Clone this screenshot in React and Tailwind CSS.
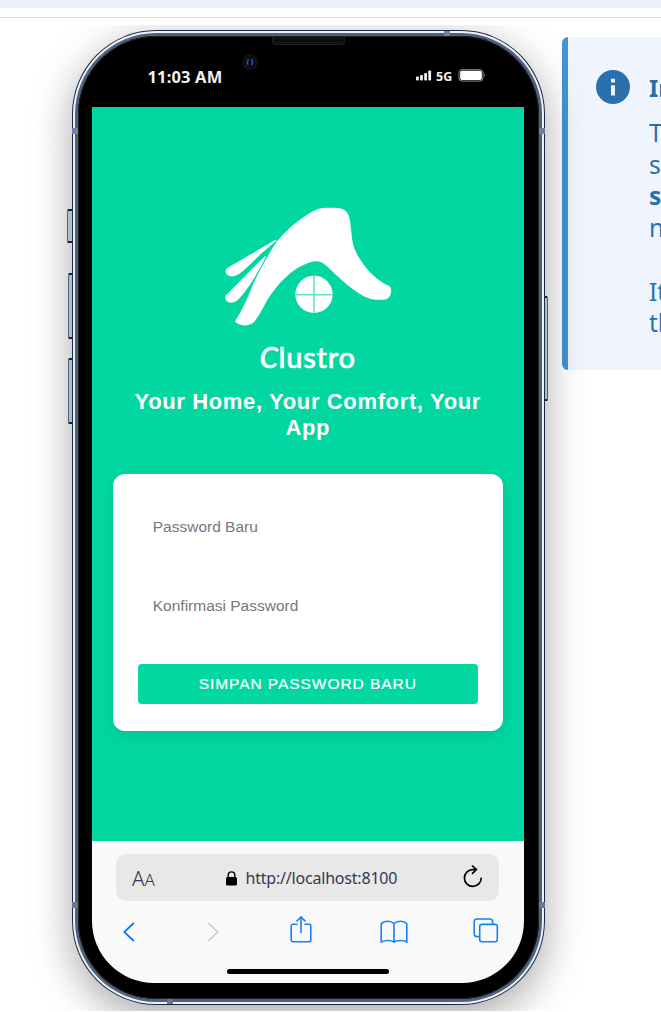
import React from "react";

function Logo() {
  return (
    <svg className="block h-[125px] w-[175px]" viewBox="60 45 525 375" fill="#fff">
      <path d="M105 394Q120 372 135 340C147 315 156 290 165 270Q181 237 200 205Q214 177 230 155Q246 135 270 113C300 88 328 68 352 58C368 52 410 53 425 56C443 62 449 78 451 100C455 130 455 155 465 180C485 225 525 270 566 287C577 292 576 318 562 326C550 331 525 330 512 327C465 312 420 265 380 228C362 212 350 212 330 217C275 235 235 280 205 325C190 350 180 375 163 395C145 412 115 408 105 394Z" />
      <path d="M227 149L82 234C73 240 76 255 88 258C103 262 113 255 125 246C145 230 165 208 185 190L229 152Z" />
      <path d="M195 198L78 316C72 323 78 338 92 338C105 338 113 332 121 322C138 302 152 282 165 260L198 201Z" />
      <circle cx="342" cy="313" r="56" />
      <path d="M342 257V369M286 314H398" stroke="#5fe3c0" strokeWidth="4.5" />
    </svg>
  );
}

function StatusBar() {
  return (
    <div className="flex h-[71px] items-start pt-[29px] pl-[69.5px] font-['Noto_Sans',sans-serif] font-bold text-[#f0f0f0]">
      <span className="w-[268px] text-[16.5px] leading-[24px] tracking-[0.15px] whitespace-nowrap">11:03 AM</span>
      <svg className="mt-[5px] block h-[11px] w-[16px]" viewBox="0 0 16 11" fill="#f0f0f0">
        <rect x="0" y="6.5" width="2.8" height="4" rx="0.8" />
        <rect x="4.1" y="5" width="2.8" height="5.5" rx="0.8" />
        <rect x="8.2" y="3" width="2.8" height="7.5" rx="0.8" />
        <rect x="12.3" y="0.5" width="2.8" height="10" rx="0.8" />
      </svg>
      <span className="ml-[4.5px] w-[21px] text-[12.5px] leading-[23px]">5G</span>
      <svg className="mt-[4px] ml-[0.5px] block h-[13px] w-[28px]" viewBox="0 0 28 13">
        <rect x="1" y="0.7" width="24" height="11.4" rx="3" fill="none" stroke="#8d8d8d" />
        <rect x="2.2" y="1.8" width="21.6" height="9.2" rx="1.8" fill="#fff" />
        <path d="M26 4.5Q27.6 6.3 26 8.2Z" fill="#8d8d8d" />
      </svg>
    </div>
  );
}

function LoginScreen() {
  return (
    <div className="flex h-[734px] flex-col items-center bg-[#02d7a1] pt-[98px] font-['Liberation_Sans',Arial,sans-serif]">
      <Logo />
      <div className="mt-[8px] h-[38px] font-[Lato,sans-serif] text-[29px] leading-[38px] font-medium tracking-[0.75px] text-white [-webkit-text-stroke:0.6px_white]">
        <span className="italic">C</span>lustro
      </div>
      <h1 className="mt-[13px] text-center text-[22px] leading-[26px] font-bold tracking-[0.64px] whitespace-nowrap text-white">
        Your Home, Your Comfort, Your
        <br />
        App
      </h1>
      <form className="mt-[33px] flex h-[257px] w-[390px] flex-col rounded-[12px] bg-white px-[25px] pt-[33px] shadow-[0_4px_16px_rgba(0,0,0,0.1)]">
        <div className="h-[79px] pl-[15px] text-[15.5px] leading-[40px] text-[#777]">Password Baru</div>
        <div className="h-[78px] pl-[15px] text-[15.5px] leading-[40px] text-[#777]">Konfirmasi Password</div>
        <button type="button" className="h-[40px] w-[340px] rounded-[4px] bg-[#02d7a1] text-[15.5px] leading-[40px] tracking-[0.95px] text-white [-webkit-text-stroke:0.2px_white]">
          SIMPAN PASSWORD BARU
        </button>
      </form>
    </div>
  );
}

function BrowserBar() {
  return (
    <div className="h-[142px] rounded-b-[62px] bg-[#f9f9f9] pt-[13px] font-['Noto_Sans',sans-serif]">
      <div className="ml-[24px] flex h-[47px] w-[383px] items-center rounded-[10px] bg-[#e8e8e8] pl-[16px] text-[#2d3a52]">
        <span className="w-[94px] pt-[2px] text-[20.5px] leading-[45px] [font-weight:350]">
          A<span className="text-[17px]">A</span>
        </span>
        <svg className="mt-px block h-[15px] w-[11px]" viewBox="0 0 11 15">
          <rect y="6" width="11" height="8.5" rx="1.6" fill="#000" />
          <path d="M2.2 7V4.2a3.3 3.3 0 0 1 6.6 0V7" fill="none" stroke="#000" strokeWidth="1.4" />
        </svg>
        <span className="ml-[8.5px] w-[217.5px] text-[16px] whitespace-nowrap tracking-[-0.2px]">http://localhost:8100</span>
        <svg className="mt-[-3px] block h-[24px] w-[20px]" viewBox="0 0 20 24" fill="none" stroke="#000" strokeWidth="1.7">
          <path d="M18.2 13.6A8.4 8.4 0 1 1 9.8 5.6H13M9 1.5L13.4 5.6L9 9.8" />
        </svg>
      </div>
      <div className="flex h-[60px] items-center pl-[31px]">
        <svg className="mt-[1px] h-[20px] w-[12px]" viewBox="0 0 12 20" fill="none" stroke="#007aff" strokeWidth="1.8">
          <path d="M10.8 1L1.2 10L10.8 19" />
        </svg>
        <svg className="mt-[1px] ml-[72px] h-[20px] w-[12px]" viewBox="0 0 12 20" fill="none" stroke="#c9c9c9" strokeWidth="1.5">
          <path d="M1.2 1L10.8 10L1.2 19" />
        </svg>
        <svg className="mt-[-4px] ml-[71px] h-[27px] w-[22px]" viewBox="0 0 22 27" fill="none" stroke="#1680ff" strokeWidth="1.6">
          <path d="M7.5 8.3H3a1.8 1.8 0 0 0-1.8 1.8V24A1.8 1.8 0 0 0 3 25.8H19a1.8 1.8 0 0 0 1.8-1.8V10.1A1.8 1.8 0 0 0 19 8.3H14.5M11 17V1M6.5 5.3L11 1L15.5 5.3" />
        </svg>
        <svg className="mt-[1px] ml-[67.5px] h-[23px] w-[28px]" viewBox="0 0 28 23" fill="none" stroke="#1680ff" strokeWidth="1.6">
          <path d="M14 3.5C11 .5 4.5 .2 1.2 3.8V22C4.5 20 11 20 14 22C17 20 23.500 20 26.800 22V3.800C23.500 .2 17 .5 14 3.500V22" />
        </svg>
        <svg className="mt-[-2px] ml-[65px] h-[25px] w-[26px]" viewBox="0 0 26 25" fill="none" stroke="#1680ff" strokeWidth="1.6">
          <path d="M6.500 18.600H4A2.800 2.800 0 0 1 1.200 15.800V3.800A2.800 2.800 0 0 1 4 1H16.800A2.800 2.800 0 0 1 19.600 3.800V6.200" />
          <rect x="6.700" y="6.400" width="17.600" height="17.300" rx="2.200" />
        </svg>
      </div>
      <div className="mx-auto mt-[8px] h-[5px] w-[162px] rounded-full bg-black" />
    </div>
  );
}

function SideButton({ className }) {
  return (
    <span
      className={
        "absolute rounded-[1.5px] border-y-2 border-x border-y-[#1c2635] border-x-[#5b7191] bg-[#d4dff0] " + className
      }
    />
  );
}

function Phone() {
  return (
    <div className="relative h-[975px] w-[473px] shrink-0">
      <SideButton className="top-[179px] left-[-5px] h-[34px] w-[6px]" />
      <SideButton className="top-[243px] left-[-4px] h-[66px] w-[5px]" />
      <SideButton className="top-[328px] left-[-4px] h-[66px] w-[5px]" />
      <SideButton className="top-[266px] right-[-3px] h-[105px] w-[4px]" />
      <div className="relative h-[975px] w-[473px] overflow-hidden rounded-[84px] bg-[#1c2a3f] p-px">
        <div className="h-full rounded-[83px] bg-[#edf3fa] p-[2px]">
          <div className="h-full rounded-[81px] bg-[#4d627e] p-[3px]">
            <div className="h-full overflow-hidden rounded-[78px] bg-black shadow-[inset_0_0_0_1px_#25211f]">
              <StatusBar />
              <div className="ml-[14px] w-[431.500px]">
                <LoginScreen />
                <BrowserBar />
              </div>
            </div>
          </div>
        </div>
        <span className="absolute top-px left-[372px] h-[5px] w-[6px] bg-[#7182a6]" />
        <span className="absolute bottom-px left-[95px] h-[5px] w-[6px] bg-[#66779a]" />
        <span className="absolute top-[98px] left-0 h-[6px] w-[6px] bg-[#7182a6]" />
        <span className="absolute top-[98px] right-0 h-[6px] w-[6px] bg-[#7182a6]" />
        <span className="absolute top-[872px] left-0 h-[6px] w-[6px] bg-[#66779a]" />
        <span className="absolute top-[872px] right-0 h-[6px] w-[6px] bg-[#66779a]" />
        <span className="absolute top-[7px] left-[200px] h-[8px] w-[73px] rounded-b-[4px] border border-t-0 border-[#232323] bg-[#0c0c0c] p-px">
          <span className="block h-[5px] rounded-full border border-dotted border-[#2c2c2c]" />
        </span>
        <svg className="absolute top-[23px] left-[168.500px] h-[18px] w-[18px]" viewBox="0 0 18 18">
          <circle cx="9" cy="9" r="8" fill="#101010" />
          <circle cx="9" cy="9" r="4.500" fill="#030610" />
          <path d="M7.500 6Q5.500 9 7 12" stroke="#236078" strokeWidth="1.500" fill="none" />
          <path d="M10.300 6Q12.500 9 10.500 12" stroke="#2749c4" strokeWidth="1.800" fill="none" />
        </svg>
      </div>
    </div>
  );
}

function InfoPanel() {
  return (
    <aside className="mt-[12px] ml-[17px] flex h-[333px] w-[600px] shrink-0 rounded-[6px] border-l-[6px] border-[#4493d6] bg-[#f0f5fd] pl-[28px] font-['Noto_Sans',sans-serif] text-[24.5px] leading-[31.700px] text-[#2a70ad]">
      <svg className="mt-[33px] block h-[34px] w-[34px] shrink-0" viewBox="0 0 34 34">
        <circle cx="17" cy="17" r="17" fill="#2a70ad" />
        <path d="M15 8.800H19V12.500H15ZM15 15.200H19V25.500H15Z" fill="#eff4fc" />
      </svg>
      <div className="ml-[19px] pt-[35px] whitespace-nowrap">
        <strong className="block h-[45px] text-[24px]">In</strong>
        <p>T</p>
        <p>s</p>
        <p><strong>s</strong></p>
        <p>n</p>
        <p className="mt-[31.700px]">It</p>
        <p>th</p>
      </div>
    </aside>
  );
}

export default function App() {
  return (
    <div className="h-[1012px] w-[661px] overflow-hidden bg-white">
      <div className="h-[8px] bg-[#ecf0fa]" />
      <div className="mt-[9px] h-px bg-[#dedfe1]" />
      <main className="relative mt-[7px] flex h-[986px] overflow-hidden pl-[72px]">
        <div className="pt-[5px]">
          <Phone />
        </div>
        <InfoPanel />
        <div className="pointer-events-none absolute top-[5px] left-[72px] h-[975px] w-[473px] rounded-[84px] shadow-[0_12px_40px_rgba(0,0,0,0.34)]" />
      </main>
    </div>
  );
}
